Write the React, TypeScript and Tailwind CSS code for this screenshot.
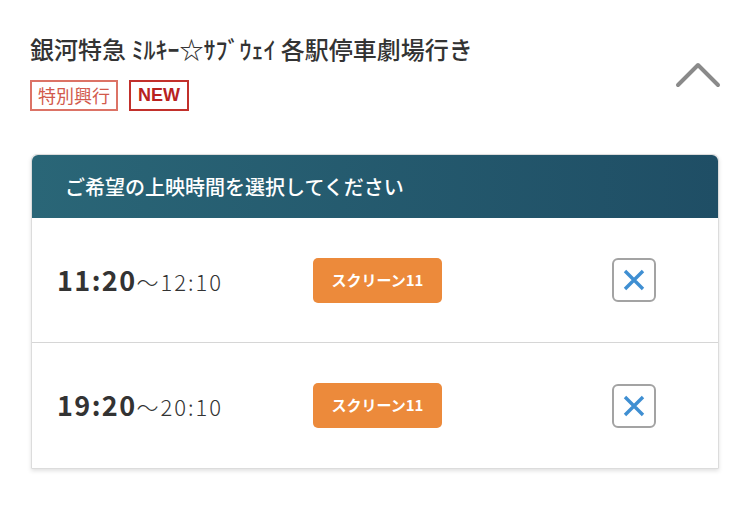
import React from 'react';

const font = { fontFamily: '"Noto Sans CJK JP", "Noto Sans", sans-serif' };

type Showing = { start: string; end: string; screen: string };

const showings: Showing[] = [
  { start: '11:20', end: '12:10', screen: 'スクリーン11' },
  { start: '19:20', end: '20:10', screen: 'スクリーン11' },
];

function ChevronUp() {
  return (
    <svg width="48" height="28" viewBox="0 0 48 28" fill="none">
      <path d="M4 25 L24 5 L44 25" stroke="#8a8a8a" strokeWidth="4" strokeLinecap="round" strokeLinejoin="round" />
    </svg>
  );
}

function CloseBox() {
  return (
    <div className="w-[44px] h-[44px] rounded-[6px] border-2 border-[#a3a3a3] bg-white flex items-center justify-center">
      <svg width="24" height="24" viewBox="0 0 24 24" fill="none">
        <path d="M3 3 L21 21 M21 3 L3 21" stroke="#3f8fd2" strokeWidth="3.4" strokeLinecap="butt" />
      </svg>
    </div>
  );
}

function ShowingRow({ s, last }: { s: Showing; last: boolean }) {
  return (
    <div className={`flex items-center h-[125px] pl-[25px] pr-[62px] ${last ? '' : 'border-b border-[#d6d6d6]'}`}>
      <div className="w-[256px] flex items-baseline text-[#333]">
        <span className="text-[27px] font-bold tracking-[1.4px]">{s.start}</span>
        <span className="text-[22px] font-light tracking-[2px]">〜{s.end}</span>
      </div>
      <button className="h-[45px] w-[129px] rounded-[5px] bg-[#ec8a3b] text-white text-[15px] font-bold">
        {s.screen}
      </button>
      <div className="ml-auto">
        <CloseBox />
      </div>
    </div>
  );
}

export default function App() {
  return (
    <div className="w-[750px] h-[515px] bg-white" style={font}>
      <div className="flex justify-between pl-[30px] pr-[28px] pt-[32px]">
        <div>
          <h1 className="text-[24px] font-medium text-[#333] leading-[34px]">
            銀河特急 ﾐﾙｷｰ☆ｻﾌﾞｳｪｲ 各駅停車劇場行き
          </h1>
          <div className="flex gap-[11px] mt-[14px]">
            <span className="h-[31px] px-[6px] border-2 border-[#dc7366] text-[#d25a4c] text-[18px] leading-[27px]">
              特別興行
            </span>
            <span
              className="h-[31px] px-[7px] border-2 border-[#c2302b] text-[#b8221f] text-[18px] font-bold leading-[27px]"
              style={{ fontFamily: '"Liberation Sans", Arial, sans-serif' }}
            >
              NEW
            </span>
          </div>
        </div>
        <div className="pt-[28px]">
          <ChevronUp />
        </div>
      </div>

      <div className="mx-[31px] mt-[43px] rounded-t-[6px] border border-[#dcdcdc] shadow-[0_2px_4px_rgba(0,0,0,0.12)]">
        <div className="h-[63px] rounded-t-[6px] bg-gradient-to-r from-[#2a6677] to-[#1f4e65] flex items-center pl-[33px] text-white text-[20px] font-medium">
          ご希望の上映時間を選択してください
        </div>
        {showings.map((s, i) => (
          <ShowingRow key={i} s={s} last={i === showings.length - 1} />
        ))}
      </div>
    </div>
  );
}
